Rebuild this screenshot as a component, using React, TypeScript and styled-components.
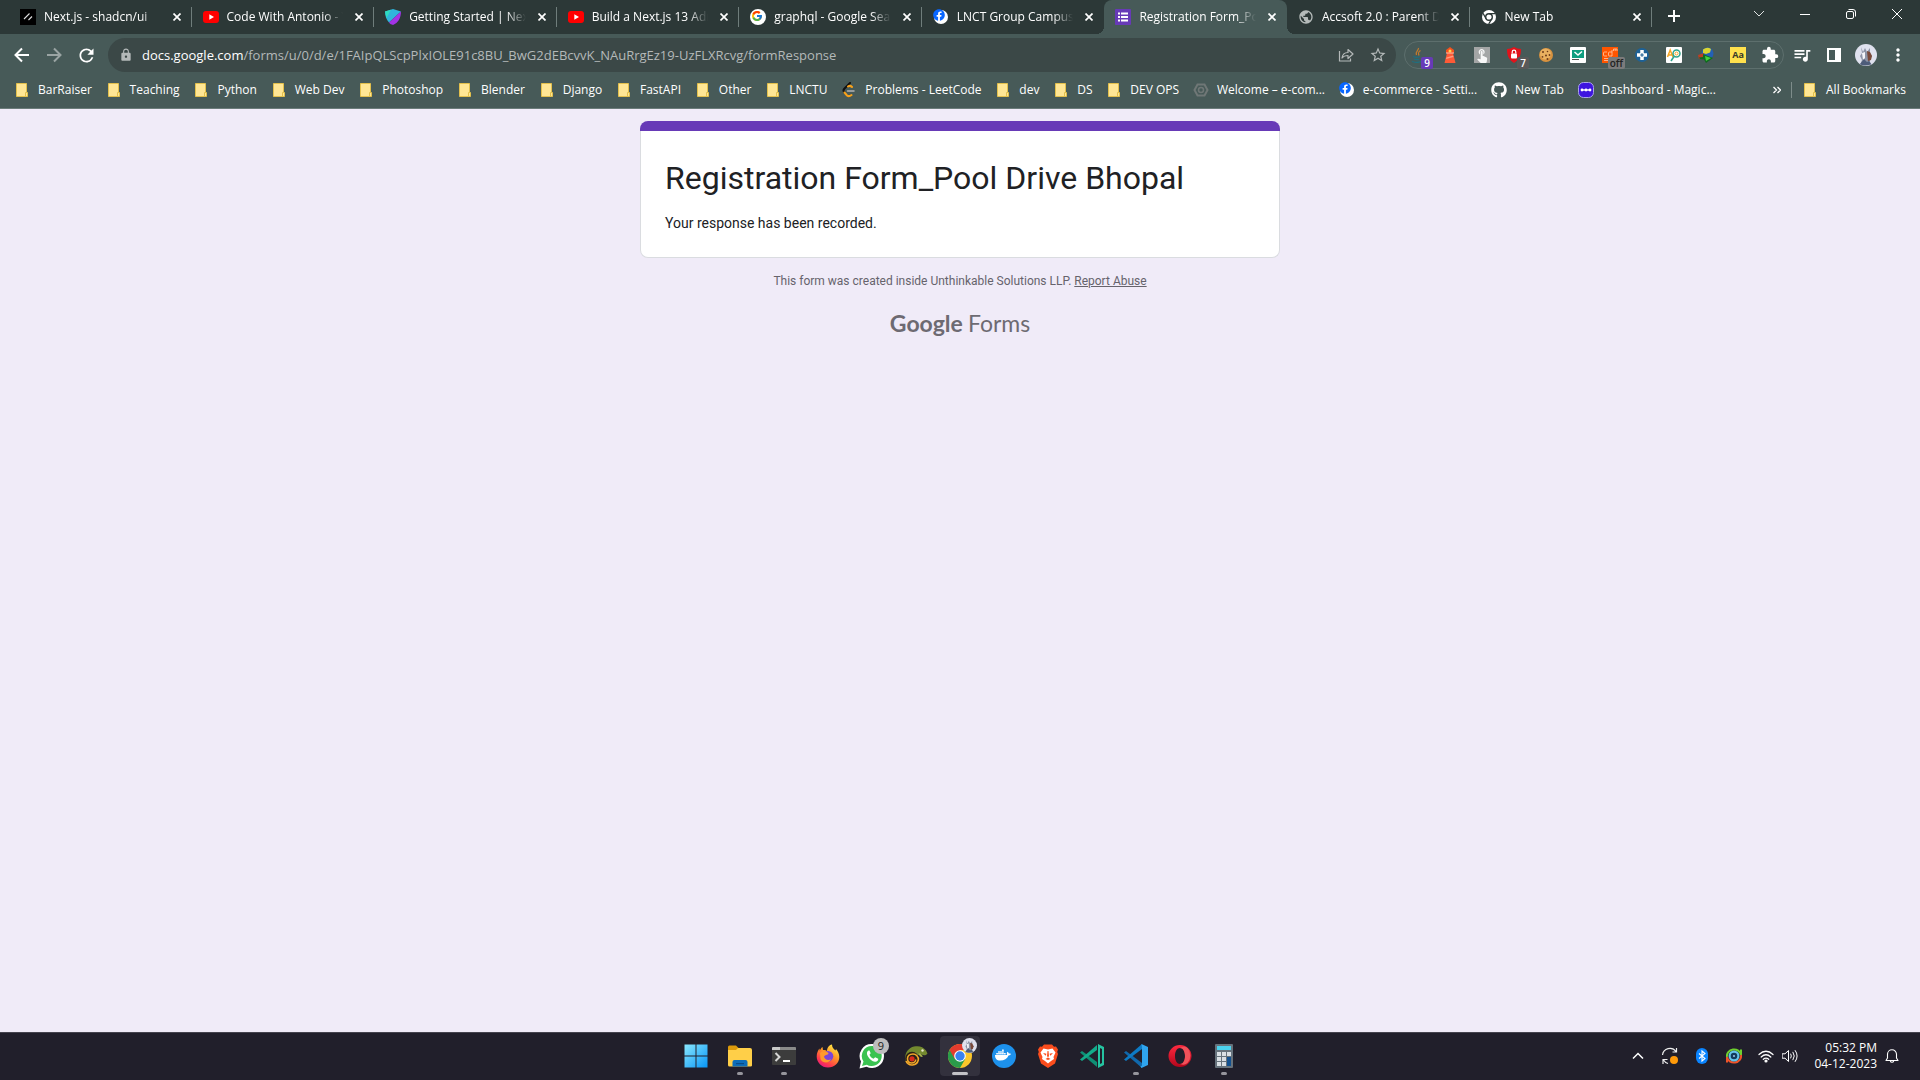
import React from "react";
import styled, { createGlobalStyle, css } from "styled-components";
import { FaFacebook, FaGithub, FaDocker } from "react-icons/fa";
import { FcGoogle } from "react-icons/fc";
import {
  MdRefresh,
  MdLock,
  MdStarBorder,
  MdExtension,
  MdQueueMusic,
  MdMoreVert,
  MdPublic,
  MdTouchApp,
} from "react-icons/md";

const colors = {
  strip: "#2c3837",
  toolbar: "#475a58",
  address: "#3b4847",
  page: "#f0ebf8",
  taskbar: "#211f2b",
  accent: "#673ab7",
};

const ui = `"Open Sans", "Noto Sans", sans-serif`;

const GlobalStyle = createGlobalStyle`
  *, *::before, *::after { box-sizing: border-box; }
  body { margin: 0; background: ${colors.page}; }
  button { font: inherit; color: inherit; background: none; border: 0; padding: 0; cursor: pointer; }
  svg { display: block; flex: none; }
`;

const Screen = styled.div`
  display: flex;
  flex-direction: column;
  min-height: 100vh;
  font-family: ${ui};
  color: #fff;
`;

/* ---------- tab strip ---------- */

const TabStrip = styled.header`
  display: flex;
  height: 34px;
  padding-left: 9px;
  background: ${colors.strip};
`;

const TabList = styled.nav`
  display: flex;
  flex: 1;
  min-width: 0;
`;

const Tab = styled.div<{ $active?: boolean }>`
  position: relative;
  display: flex;
  flex: 1 1 0;
  min-width: 0;
  align-items: center;
  gap: 8px;
  padding: 0 7px 0 11px;
  font-size: 12px;

  &:not(:has(+ [data-active="true"]))::after {
    content: "";
    position: absolute;
    right: 0;
    top: 7px;
    width: 1px;
    height: 20px;
    background: #6f7d7b;
  }

  ${(p) =>
    p.$active &&
    css`
      background: ${colors.toolbar};
      border-radius: 8px 8px 0 0;

      &&::after,
      &&::before {
        content: "";
        position: absolute;
        top: auto;
        bottom: 0;
        width: 8px;
        height: 8px;
      }
      &&::before {
        left: -8px;
        background: radial-gradient(circle at 0 0, transparent 8px, ${colors.toolbar} 8px);
      }
      &&&::after {
        right: -8px;
        width: 8px;
        height: 8px;
        top: auto;
        background: radial-gradient(circle at 100% 0, transparent 8px, ${colors.toolbar} 8px);
      }
    `}
`;

const TabTitle = styled.button`
  flex: 1;
  min-width: 0;
  overflow: hidden;
  white-space: nowrap;
  text-align: left;
  line-height: 20px;
  mask-image: linear-gradient(90deg, #000 calc(100% - 20px), transparent);
`;

const CloseTab = styled.button`
  display: grid;
  place-items: center;
  width: 16px;
  height: 16px;
`;

const NewTab = styled.button`
  display: grid;
  place-items: center;
  width: 28px;
  height: 32px;
  margin-left: 8px;
`;

const WindowControls = styled.div`
  display: flex;
  margin-left: 48px;
`;

const WindowButton = styled.button`
  display: grid;
  place-items: center;
  width: 46px;
  height: 28px;
`;

/* ---------- toolbar ---------- */

const Toolbar = styled.div`
  display: flex;
  align-items: center;
  height: 40px;
  padding: 2px 6px 0;
  background: ${colors.toolbar};
`;

const ToolButton = styled.button<{ $dim?: boolean }>`
  display: grid;
  place-items: center;
  width: 32px;
  height: 32px;
  opacity: ${(p) => (p.$dim ? 0.45 : 1)};
`;

const AddressBar = styled.form`
  display: flex;
  flex: 1;
  align-items: center;
  height: 34px;
  margin: 0 8px 0 6px;
  padding: 0 2px 0 11px;
  border-radius: 17px;
  background: ${colors.address};
  font-size: 13px;
  color: #b4b9b9;
`;

const Host = styled.label`
  margin-left: 9px;
  color: #fff;
`;

const PathInput = styled.input`
  flex: 1;
  min-width: 0;
  padding: 0;
  border: 0;
  outline: 0;
  background: none;
  color: inherit;
  font: inherit;
`;

const Extensions = styled.div`
  display: flex;
  align-items: center;
  gap: 8px;
  height: 28px;
  margin-right: 2px;
  padding: 0 1px;
  border: 1px solid #5d6f6d;
  border-radius: 14px;
`;

const ExtensionButton = styled.button`
  position: relative;
  display: grid;
  place-items: center;
  width: 24px;
  height: 26px;
`;

const ExtensionBadge = styled.span<{ $color: string; $ink: string }>`
  position: absolute;
  top: 15px;
  right: -3px;
  min-width: 12px;
  padding: 0 2px;
  border-radius: 2px;
  background: ${(p) => p.$color};
  color: ${(p) => p.$ink};
  font-size: 10px;
  font-weight: 600;
  line-height: 12px;
`;

/* ---------- bookmarks ---------- */

const Bookmarks = styled.nav`
  display: flex;
  align-items: center;
  height: 35px;
  padding: 0 14px 2px;
  border-bottom: 1px solid #6b7c7a;
  background: ${colors.toolbar};
  font-size: 12px;
`;

const BookmarkList = styled.div`
  display: flex;
  flex: 0 1 1702px;
  min-width: 0;
  justify-content: space-between;
`;

const Bookmark = styled.a`
  display: flex;
  align-items: center;
  gap: 8px;
  color: #fff;
  line-height: 20px;
  text-decoration: none;
  white-space: nowrap;
`;

const BookmarkEnd = styled.div`
  display: flex;
  align-items: center;
  gap: 10px;
  margin-left: auto;
`;

const Divider = styled.span`
  width: 1px;
  height: 16px;
  background: #7d8c8a;
`;

/* ---------- form ---------- */

const Page = styled.main`
  display: flex;
  flex: 1;
  flex-direction: column;
  align-items: center;
  padding-top: 12px;
  background: ${colors.page};
  font-family: Roboto, "Liberation Sans", sans-serif;
`;

const Card = styled.section`
  width: 100%;
  max-width: 640px;
  color: #202124;
`;

const CardAccent = styled.div`
  height: 10px;
  border-radius: 8px 8px 0 0;
  background: ${colors.accent};
`;

const CardBody = styled.div`
  padding: 25px 24px 23px;
  border: 1px solid #dadce0;
  border-top: 0;
  border-radius: 0 0 8px 8px;
  background: #fff;
`;

const FormTitle = styled.h1`
  margin: 0;
  font-size: 32px;
  font-weight: 400;
  line-height: 44px;
`;

const FormText = styled.p`
  margin: 13px 0 0;
  font-size: 14px;
  line-height: 21px;
`;

const Disclaimer = styled.p`
  margin: 15px 0 0;
  color: #66636c;
  font-size: 12px;
  line-height: 16px;
`;

const Report = styled.a`
  color: inherit;
`;

const FormsLogo = styled.a`
  display: flex;
  gap: 5px;
  margin-top: 18px;
  color: #6d6a72;
  font-family: Lato, sans-serif;
  font-size: 23px;
  line-height: 32px;
  text-decoration: none;
`;

const LogoStrong = styled.span`
  font-weight: 700;
`;

/* ---------- taskbar ---------- */

const Taskbar = styled.footer`
  display: grid;
  grid-template-columns: 1fr auto 1fr;
  align-items: center;
  height: 48px;
  padding-bottom: 2px;
  border-top: 1px solid #45434e;
  background: ${colors.taskbar};
`;

const Apps = styled.div`
  display: flex;
  grid-column: 2;
  gap: 4px;
`;

const AppButton = styled.button<{ $state?: "running" | "active" }>`
  position: relative;
  display: grid;
  place-items: center;
  width: 40px;
  height: 40px;
  border-radius: 4px;
  background: ${(p) => (p.$state === "active" ? "#33313d" : "none")};

  &::after {
    content: ${(p) => (p.$state ? '""' : "none")};
    position: absolute;
    bottom: 1px;
    width: ${(p) => (p.$state === "active" ? "16px" : "6px")};
    height: 3px;
    border-radius: 2px;
    background: ${(p) => (p.$state === "active" ? "#c3c2c6" : "#96959c")};
  }
`;

const Count = styled.span`
  position: absolute;
  top: 2px;
  right: 3px;
  width: 16px;
  height: 16px;
  border-radius: 8px;
  background: #bdbdbd;
  color: #222;
  font-size: 11px;
  line-height: 16px;
`;

const ProfileBadge = styled.span`
  position: absolute;
  top: 2px;
  right: 3px;
`;

const Tray = styled.div`
  display: flex;
  align-items: center;
  justify-content: flex-end;
  padding-right: 16px;
`;

const trayWidths = { narrow: "16px", normal: "24px", wide: "32px" };

const TrayButton = styled.button<{ $size?: keyof typeof trayWidths }>`
  display: grid;
  place-items: center;
  width: ${(p) => trayWidths[p.$size || "wide"]};
  height: 32px;
`;

const Clock = styled.time`
  width: 79px;
  margin-right: 3px;
  text-align: right;
  font-size: 12px;
  line-height: 16px;
  white-space: nowrap;
`;

/* ---------- drawings ---------- */

const CloseIcon = () => (
  <svg width="8" height="8" viewBox="0 0 8 8" stroke="#fff" strokeWidth="1.700">
    <path d="M.5.5l7 7M7.500.5l-7 7" />
  </svg>
);

const ArrowIcon = ({ forward }: { forward?: boolean }) => (
  <svg width="16" height="16" viewBox="0 0 16 16" fill="none" stroke="#fff" strokeWidth="2">
    <path d={forward ? "M1 8h13M8 1.500L14.500 8 8 14.500" : "M15 8H2M8 1.500L1.500 8 8 14.500"} />
  </svg>
);

const FolderIcon = () => (
  <svg width="16" height="16" viewBox="0 0 16 16">
    <path d="M2.500 1.500h10v9h1v4h-11z" fill="#ffe694" stroke="#e3c04c" />
    <path d="M11.500 14v-3.500h1.500" fill="none" stroke="#e3c04c" />
  </svg>
);

const ShadcnIcon = () => (
  <svg width="16" height="16" viewBox="0 0 16 16">
    <rect width="16" height="16" fill="#000" />
    <path d="M4 10l5.500-5.500M8.500 11l3.500-3.500" stroke="#ddd" strokeWidth="1.100" />
  </svg>
);

const ShieldIcon = () => (
  <svg width="16" height="16" viewBox="0 0 16 16">
    <path d="M0 2.500L8 0l8 2.500-12 11C1.500 11 0 7 0 2.500z" fill="#2fb5dc" />
    <path d="M16 2.500L4 13.500C5 15 6.500 15.500 8 16c5-2 8-7 8-13.500z" fill="#a233e6" />
    <path d="M0 2.500L6 .7 1.500 9z" fill="#2fdcc0" />
  </svg>
);

const YoutubeIcon = () => (
  <svg width="16" height="16" viewBox="0 0 16 16">
    <rect y="2" width="16" height="12" rx="3" fill="#f00" />
    <path d="M6.300 5.300v5.400L11 8z" fill="#fff" />
  </svg>
);

const GoogleIcon = () => (
  <svg width="16" height="16" viewBox="0 0 16 16">
    <circle cx="8" cy="8" r="8" fill="#fff" />
    <FcGoogle x="1" y="1" width="14" height="14" />
  </svg>
);

const FacebookIcon = () => (
  <svg width="16" height="16" viewBox="0 0 16 16">
    <circle cx="8" cy="8" r="7" fill="#fff" />
    <FaFacebook x="0" y="0" width="16" height="16" color="#0866ff" />
  </svg>
);

const FormsIcon = () => (
  <svg width="16" height="16" viewBox="0 0 16 16">
    <rect width="16" height="16" rx="1" fill={colors.accent} />
    <path d="M3 4.500h2M3 8h2M3 11.500h2M6 4.500H13M6 8H13M6 11.500H13" stroke="#fff" strokeWidth="1.800" />
  </svg>
);

const ChromeMonoIcon = () => (
  <svg width="16" height="16" viewBox="0 0 16 16">
    <circle cx="8" cy="8" r="7" fill="#fff" />
    <circle cx="8" cy="8" r="3.300" fill="#fff" stroke="#2c3837" strokeWidth="1.400" />
    <path d="M8 4.700h6.500M5.100 9.700L2 4.300M10.900 9.700L7.700 15" stroke="#2c3837" strokeWidth="1.300" />
  </svg>
);

const HexIcon = () => (
  <svg width="16" height="16" viewBox="0 0 16 16" fill="none" stroke="#6f7776">
    <path d="M4.500 2.500h7l3 5.500-3 5.500h-7L1.500 8z" strokeWidth="2" />
    <circle cx="8" cy="8" r="2.500" strokeWidth="1.500" />
  </svg>
);

const MagicIcon = () => (
  <svg width="16" height="16" viewBox="0 0 16 16">
    <rect x=".5" y=".5" width="15" height="15" rx="5" fill="#3d14e0" stroke="#a9a4e8" />
    <path d="M3 8h10" stroke="#fff" strokeWidth="1.400" />
    <circle cx="4" cy="8" r="1.400" fill="#fff" />
    <circle cx="8" cy="8" r="1.400" fill="#fff" />
    <circle cx="12" cy="8" r="1.400" fill="#fff" />
  </svg>
);

const LeetIcon = () => (
  <svg width="16" height="16" viewBox="0 0 16 16" fill="none" strokeLinecap="round" strokeWidth="2">
    <path d="M9 1L3.500 6.500Q1.500 8.500 3.500 10.500" stroke="#111" />
    <path d="M3.500 10.500L6 13.500Q8 15 10.500 13M7 4.500Q9 3 11 5" stroke="#f8a119" />
    <path d="M6.500 9H13" stroke="#b3b3b3" strokeWidth="1.500" />
  </svg>
);

const JavaIcon = () => (
  <svg width="16" height="16" viewBox="0 0 16 16" fill="none">
    <path d="M8.500 1C9 3 5 4.500 6.500 8M10.500 3.500C8 5 8 6 9 8.500" stroke="#c07a2d" strokeWidth="1.300" />
    <path d="M3 9.500c2 1 5 1 7 0M4 12c2 .8 4 .8 5 .3M2 14.500c3 1 7 1 9 0" stroke="#1f6f80" strokeWidth="1.300" />
  </svg>
);

const LighthouseIcon = () => (
  <svg width="16" height="18" viewBox="0 0 16 18">
    <path d="M8 1l4 3v3H4V4z" fill="#f4511e" />
    <circle cx="8" cy="5" r="1.500" fill="#ffd54f" />
    <path d="M5 7h6l2.500 10h-11z" fill="#ff5a36" />
    <path d="M4.500 11.500l6.500-2 .5 1.500L4 13z" fill="#ff9c80" />
    <path d="M4 7h8" stroke="#ffc1ad" />
  </svg>
);

const TouchIcon = () => (
  <svg width="16" height="16" viewBox="0 0 16 16">
    <rect width="16" height="16" fill="#a4a6a6" />
    <MdTouchApp x="0" y="0" width="16" height="16" color="#f7f7f7" />
  </svg>
);

const ShieldLockIcon = () => (
  <svg width="16" height="16" viewBox="0 0 16 16">
    <path d="M8 0q3.500 2 7 2c0 7-2 11-7 14C3 13 1 9 1 2q3.500 0 7-2z" fill="#e2131b" />
    <rect x="5" y="6.500" width="6" height="5" rx="1" fill="#fff" />
    <path d="M6.200 6.500V5a1.800 1.800 0 013.600 0v1.500" fill="none" stroke="#fff" strokeWidth="1.200" />
  </svg>
);

const CookieIcon = () => (
  <svg width="16" height="16" viewBox="0 0 16 16">
    <circle cx="8" cy="8" r="7" fill="#d8923f" />
    <circle cx="7.500" cy="7" r="5.500" fill="#e9b060" />
    <g fill="#6d3b18">
      <circle cx="5" cy="5" r="1" />
      <circle cx="9.500" cy="4.500" r=".8" />
      <circle cx="8" cy="8.500" r="1" />
      <circle cx="4.500" cy="9.800" r=".9" />
      <circle cx="11.500" cy="8" r=".9" />
      <circle cx="9.500" cy="12" r="1" />
    </g>
  </svg>
);

const MailIcon = () => (
  <svg width="16" height="16" viewBox="0 0 16 16">
    <rect width="16" height="16" rx="1" fill="#fff" />
    <rect x="2" y="3" width="12" height="8" fill="#0f9d80" />
    <path d="M4.500 5l3.500 3 4-3.500" fill="none" stroke="#fff" strokeWidth="1.500" />
    <path d="M2 12.500h7" stroke="#555" />
  </svg>
);

const CdIcon = () => (
  <svg width="16" height="16" viewBox="0 0 16 16">
    <rect width="16" height="16" fill="#ff5500" />
    <path
      d="M5 5H2.500q-1 0-1 1v2q0 1 1 1H5M10 3v6H7.500q-1 0-1-1V6q0-1 1-1H10M11.500 4V2H15v2M13.200 2v2M2 11.500h8M2 13.500h5"
      stroke="#ffc9a8"
      fill="none"
      strokeWidth=".8"
    />
  </svg>
);

const PlusDotIcon = () => (
  <svg width="16" height="16" viewBox="0 0 16 16">
    <circle cx="8" cy="8" r="7" fill="#1e6196" />
    <path d="M8 3v10M3 8h10" stroke="#fff" strokeWidth="3.500" />
    <path d="M8 6.200v3.600M6.200 8h3.600" stroke="#1e6196" strokeWidth="1.200" />
  </svg>
);

const SearchLettersIcon = () => (
  <svg width="16" height="16" viewBox="0 0 16 16" fill="none">
    <rect width="16" height="16" rx="1" fill="#fff" />
    <path d="M1.500 10l2.700-7 2.800 7M2.500 8H6" stroke="#f5a623" strokeWidth="1.500" />
    <circle cx="10.500" cy="6.500" r="3.500" stroke="#2fa58c" strokeWidth="1.500" />
    <circle cx="10.500" cy="6.500" r="1.500" stroke="#f5a623" />
    <path d="M8 9.500L5 14" stroke="#2fa58c" strokeWidth="1.600" />
  </svg>
);

const IdmIcon = () => (
  <svg width="16" height="16" viewBox="0 0 16 16">
    <circle cx="9.500" cy="6.500" r="6" fill="#2360b5" />
    <path d="M5 2.500Q9-.5 13 2l-1 3.500-4 1.500-3-1z" fill="#d9d431" />
    <path d="M0 8l6-2-1 5-4 1z" fill="#bd3d23" />
    <path d="M1 10.500l4-.5V7l10 4-7 5-2-3.500-4-.5z" fill="#0f6b1f" />
    <path d="M7 9l6 2-5 3z" fill="#45d23b" />
  </svg>
);

const AvatarIcon = ({ size = 22 }: { size?: number }) => (
  <svg width={size} height={size} viewBox="0 0 22 22">
    <circle cx="11" cy="11" r="11" fill="#dfe1ee" />
    <path d="M6 3l2 5 2-4 2 4 3-4v5l2 3-2 3v3l2 3H5l2-5-2-4 2-3z" fill="#8d94a6" />
    <path d="M12 7l3 1 2 4-1 4-3 1z" fill="#7a4a3a" />
    <path d="M7 9l3-1v6l-2 2z" fill="#f5f5fa" />
    <path d="M5 20l4-5 3 3 2-1 2 3q-6 3-11 0z" fill="#4d5c7a" />
  </svg>
);

const ShareIcon = () => (
  <svg width="16" height="16" viewBox="0 0 16 16" fill="none" stroke="currentColor" strokeWidth="1.200">
    <path d="M1.500 4v10h11v-2.500" />
    <path d="M4 11c.5-4 3-5.500 6-5.500v-3L15 7l-5 4.500v-3c-3 0-4.500.5-6 2.500z" strokeLinejoin="round" />
  </svg>
);

const SidePanelIcon = () => (
  <svg width="16" height="16" viewBox="0 0 16 16">
    <path d="M1 1h14v14H1zM3 3v10h6V3z" fill="#fff" fillRule="evenodd" />
  </svg>
);

const WindowsIcon = () => (
  <svg width="24" height="24" viewBox="0 0 24 24">
    <defs>
      <linearGradient id="win" x1="0" y1="0" x2="1" y2="1">
        <stop offset="0" stopColor="#8ae8ff" />
        <stop offset="1" stopColor="#0795f5" />
      </linearGradient>
    </defs>
    <path d="M.5.5h11v11H.500zM12.500.5h11v11h-11zM.5 12.500h11v11H.500zM12.500 12.500h11v11h-11z" fill="url(#win)" />
  </svg>
);

const ExplorerIcon = () => (
  <svg width="24" height="24" viewBox="0 0 24 24">
    <path d="M0 3q0-1.500 1.500-1.500H8L10.500 4v4H0z" fill="#dd9a0b" />
    <path d="M0 6h8l2-2h12q2 0 2 2v15.500q0 1-1.500 1h-21Q0 22.500 0 21z" fill="#ffcf48" />
    <path d="M4.500 22.500V18q0-2 2-2h11q2 0 2 2v4.500z" fill="#0d6db8" />
    <path d="M8 19h8v1.200H8z" fill="#094b85" />
  </svg>
);

const TerminalIcon = () => (
  <svg width="24" height="20" viewBox="0 0 24 20">
    <rect y="1" width="24" height="18" rx="1" fill="#3c3c3c" />
    <path d="M0 2q0-1 1-1h22q1 0 1 1v2H0z" fill="#8a8a8a" />
    <path d="M1 1h7v3H0V2z" fill="#c9c9c9" />
    <path d="M3.500 7l4 4-4 4" stroke="#d6d6d6" strokeWidth="2" fill="none" />
    <path d="M11 15h7" stroke="#fff" strokeWidth="2" />
  </svg>
);

const FirefoxIcon = () => (
  <svg width="24" height="24" viewBox="0 0 24 24">
    <defs>
      <linearGradient id="fox" x1=".8" y1="0" x2=".2" y2="1">
        <stop offset="0" stopColor="#fff04a" />
        <stop offset=".4" stopColor="#ff9825" />
        <stop offset=".75" stopColor="#ff3b4b" />
        <stop offset="1" stopColor="#e31587" />
      </linearGradient>
    </defs>
    <path
      d="M12 23.500C5.500 23.500.7 18.500.7 12.500c0-3.500 1.300-6 2.800-8l.3 2.300C4.500 5 5.500 3.500 6.500 3L7 6c1.500-.3 3 0 4 1C11 4 13 1 16 .5c0 3 1.500 4 3.500 6l.5-1.500c2 2 3.300 5 3.300 8 0 6-5 10.500-11.300 10.500z"
      fill="url(#fox)"
    />
    <circle cx="12" cy="12.300" r="5.300" fill="#7a45d8" />
    <path d="M4 9c2-2 4.500-2 7-1 2 .8 2 2 0 2.800-1.500.5-2.500.5-3 2 .8 3 4 4 7 2.500-1.500 4-8 4.500-10.500 0z" fill="#ff9a2b" />
  </svg>
);

const WhatsappIcon = () => (
  <svg width="26" height="26" viewBox="0 0 26 26">
    <path d="M13.500 1A12 12 0 002 18.500L.5 25.500l7-1.800A12 12 0 0025 13 12 12 0 0013.500 1z" fill="#fff" />
    <path d="M13.200 3A10 10 0 004.500 18.500L3 23l4.800-1.300A10 10 0 1013.200 3z" fill="#3ac351" />
    <path
      d="M9.500 7.500c-2 1-2 3.500-.5 6 1.700 2.800 4 4.800 7 5.300 2 .2 3.500-1.300 3.200-3l-3-1.600-1.700 1.600c-2-.8-3.300-2.100-4-4l1.200-1.500-1.200-2.800z"
      fill="#fff"
    />
  </svg>
);

const ChameleonIcon = () => (
  <svg width="24" height="24" viewBox="0 0 24 24" fill="none">
    <path d="M2.500 19C-1 12 3 4 10 2.500c5-1 9 0 12 4l1.500 3-1.500 1.500c-3 .5-4 0-6-1.500z" fill="#73892f" />
    <circle cx="8" cy="14.500" r="6.800" fill="#2b2116" />
    <path
      d="M2 17a6.500 6.500 0 0012.300-1c.5-3.500-2.300-6-5.300-6-3.500 0-5.500 2-5.500 4.800 0 2.700 2 4.200 4.200 4.200s4-1.500 4-3.500"
      stroke="#f2a82a"
      strokeWidth="1.600"
    />
    <circle cx="8" cy="14.800" r="2.600" fill="#d92a1c" />
    <circle cx="18.500" cy="6.500" r="1.200" fill="#e6e8c8" />
    <path d="M16 9l3 3.500-2 .5-3-3z" fill="#a5b34c" />
  </svg>
);

const ChromeIcon = () => (
  <svg width="24" height="24" viewBox="0 0 24 24">
    <circle cx="12" cy="12" r="12" fill="#fcc72b" />
    <path d="M1.600 6A12 12 0 0012 24l5.200-9z" fill="#2a9c4a" />
    <path d="M1.600 6A12 12 0 0122.400 6H12L6.800 15z" fill="#e33b2e" />
    <circle cx="12" cy="12" r="5.800" fill="#fff" />
    <circle cx="12" cy="12" r="4.700" fill="#3a82f0" />
  </svg>
);

const DockerIcon = () => (
  <svg width="24" height="24" viewBox="0 0 24 24">
    <circle cx="12" cy="12" r="12" fill="#1d91ec" />
    <FaDocker x="3" y="3" width="18" height="18" color="#fff" />
  </svg>
);

const BraveIcon = () => (
  <svg width="22" height="24" viewBox="0 0 22 24">
    <path d="M7 .5h8l2 2.300 2-.3 2 3-.8 2.500.8 2-3 9.500L11 24l-7-4.500L1 10l.8-2L1 5.500l2-3 2 .3z" fill="#fb4d1d" />
    <path d="M6.500 4.500L11 5.500l4.500-1 3 4-2 4.500.5 2-3 2-3 2.500-3-2.500-3-2 .5-2-2-4.500z" fill="#fff" />
    <path d="M6 9l3.500.8-.8 2zM16 9l-3.500.8.8 2zM8.500 15l2.500 1.100 2.500-1.100-2.500-1.400zM10.500 7h1l.5 5-1 1.500-1-1.500z" fill="#fb4d1d" />
  </svg>
);

const CodeIcon = () => (
  <svg width="24" height="24" viewBox="0 0 24 24">
    <path d="M0 8.500L2 7l16 12v5z" fill="#1068ac" />
    <path d="M0 15.500L2 17 18 5V0z" fill="#0d7ac4" />
    <path d="M17.500 0L24 3v18l-6.500 3-1-1.500 1.500-1V3z" fill="#2fa4ee" />
  </svg>
);

const InsidersIcon = () => (
  <svg width="24" height="24" viewBox="0 0 24 24">
    <path d="M0 8.500L2 7l15 11v5z" fill="#0f8f75" />
    <path d="M0 15.500L2 17 17 6V1z" fill="#13ab8a" />
    <path d="M18 0l6 3v18l-6 3zM20 4v16l2-1V5z" fill="#25c3a1" fillRule="evenodd" />
  </svg>
);

const OperaIcon = () => (
  <svg width="24" height="24" viewBox="0 0 24 24">
    <defs>
      <linearGradient id="opera" x1="0" y1="0" x2="0" y2="1">
        <stop offset="0" stopColor="#ff2a40" />
        <stop offset="1" stopColor="#b3061c" />
      </linearGradient>
    </defs>
    <path
      d="M12 1a11.500 11 0 100 22 11.500 11 0 100-22zm0 3c3 0 5 3.500 5 8s-2 8-5 8-5-3.500-5-8 2-8 5-8z"
      fill="url(#opera)"
      fillRule="evenodd"
    />
    <path d="M12 4c3 0 5 3.500 5 8s-2 8-5 8q4.500 2 7.500-1A11 11 0 0019.500 4Q16 1.500 12 4z" fill="#f2525a" />
  </svg>
);

const CalculatorIcon = () => (
  <svg width="18" height="24" viewBox="0 0 18 24">
    <rect width="18" height="24" rx="1" fill="#66727c" />
    <rect x="2" y="2" width="14" height="4" fill="#4bd2ee" />
    <path d="M2 8h4v4H2zM7 8h4v4H7zM12 8h4v4h-4zM2 13h4v4H2zM7 13h4v4H7zM2 18h4v4H2zM7 18h4v4H7z" fill="#d9dfe4" />
    <path d="M12 13h4v9h-4z" fill="#12508f" />
  </svg>
);

const SyncIcon = () => (
  <svg width="18" height="18" viewBox="0 0 18 18" fill="none" stroke="#eee" strokeWidth="1.200">
    <path d="M1.500 8A7.500 7.500 0 0115 4.500M15.500 1v4h-4M7 16.500A7.500 7.500 0 012.500 13M2 17v-4.500h4.500" />
    <circle cx="13" cy="13" r="4" fill="#ff9a0a" stroke="none" />
  </svg>
);

const BluetoothIcon = () => (
  <svg width="12" height="16" viewBox="0 0 12 16">
    <rect width="12" height="16" rx="6" fill="#0a84ff" />
    <path d="M3 5.500l6 5-3 2.500V3l3 2.500-6 5" fill="none" stroke="#fff" strokeWidth="1.100" />
  </svg>
);

const RingIcon = () => (
  <svg width="16" height="16" viewBox="0 0 16 16" fill="none">
    <path d="M1 9A7 6.500 0 0115 7V1.500" stroke="#6fd12f" strokeWidth="2" />
    <path d="M15 7A7 6.500 0 011 9v5.500" stroke="#f0542a" strokeWidth="2" />
    <circle cx="8" cy="8" r="5.500" fill="#65c5ea" />
    <circle cx="8" cy="8" r="3.300" fill="#143b5c" />
    <circle cx="8" cy="8" r="1" fill="#9ce" />
  </svg>
);

const WifiIcon = () => (
  <svg width="16" height="16" viewBox="0 0 16 16" fill="none" stroke="#fff" strokeWidth="1.200" strokeLinecap="round">
    <path d="M1 6.500q7-6.500 14 0M3.200 9q4.800-4.500 9.600 0M5.300 11.300q2.700-2.500 5.400 0" />
    <circle cx="8" cy="13" r="1" fill="#fff" />
  </svg>
);

const VolumeIcon = () => (
  <svg width="16" height="16" viewBox="0 0 16 16" fill="none" stroke="#fff" strokeLinecap="round" strokeLinejoin="round">
    <path d="M.5 5.800H3L6.500 2.500v11L3 10.200H.500z" />
    <path d="M8.800 6q1.200 2 0 4M11 4.200q2.700 3.800 0 7.600M13.200 2.500q4 5.500 0 11" />
  </svg>
);

const BellIcon = () => (
  <svg width="16" height="16" viewBox="0 0 16 16" fill="none" stroke="#fff" strokeWidth="1.100" strokeLinejoin="round">
    <path d="M3.500 10V6.200a4.500 4.500 0 019 0V10l1.500 2.500H2zM6.300 13a1.800 1.800 0 003.400 0" />
  </svg>
);

const ChevronUpIcon = () => (
  <svg width="12" height="8" viewBox="0 0 12 8" fill="none" stroke="#fff" strokeWidth="1.500">
    <path d="M1 6.500l5-5 5 5" />
  </svg>
);

const FontsIcon = styled.span`
  width: 16px;
  height: 16px;
  background: #ffe14d;
  color: #3a3a2a;
  font-size: 9px;
  font-weight: 700;
  line-height: 16px;
  text-align: center;
`;

/* ---------- data ---------- */

const tabs = [
  { title: "Next.js - shadcn/ui", icon: <ShadcnIcon /> },
  { title: "Code With Antonio - Y", icon: <YoutubeIcon /> },
  { title: "Getting Started | NextA", icon: <ShieldIcon /> },
  { title: "Build a Next.js 13 Admi", icon: <YoutubeIcon /> },
  { title: "graphql - Google Sear", icon: <GoogleIcon /> },
  { title: "LNCT Group Campus", icon: <FacebookIcon /> },
  { title: "Registration Form_Poo", icon: <FormsIcon />, active: true },
  { title: "Accsoft 2.0 : Parent De", icon: <MdPublic size={16} color="#b5bbba" /> },
  { title: "New Tab", icon: <ChromeMonoIcon /> },
];

const bookmarks: { name: string; icon?: React.ReactNode }[] = [
  ...["BarRaiser", "Teaching", "Python", "Web Dev", "Photoshop", "Blender", "Django", "FastAPI", "Other", "LNCTU"].map(
    (name) => ({ name })
  ),
  { name: "Problems - LeetCode", icon: <LeetIcon /> },
  { name: "dev" },
  { name: "DS" },
  { name: "DEV OPS" },
  { name: "Welcome – e-com...", icon: <HexIcon /> },
  { name: "e-commerce - Setti...", icon: <FacebookIcon /> },
  { name: "New Tab", icon: <FaGithub size={16} /> },
  { name: "Dashboard - Magic...", icon: <MagicIcon /> },
];

const extensions: { name: string; icon: React.ReactNode; badge?: string; color?: string; ink?: string }[] = [
  { name: "Java", icon: <JavaIcon />, badge: "9", color: "#673ab7" },
  { name: "Lighthouse", icon: <LighthouseIcon /> },
  { name: "Touch", icon: <TouchIcon /> },
  { name: "Blocker", icon: <ShieldLockIcon />, badge: "7", color: "#595959" },
  { name: "Cookies", icon: <CookieIcon /> },
  { name: "Mail", icon: <MailIcon /> },
  { name: "Debugger", icon: <CdIcon />, badge: "off", color: "#7b7b7b", ink: "#222" },
  { name: "Health", icon: <PlusDotIcon /> },
  { name: "Word search", icon: <SearchLettersIcon /> },
  { name: "Downloads", icon: <IdmIcon /> },
  { name: "Fonts", icon: <FontsIcon>Aa</FontsIcon> },
  { name: "Extensions", icon: <MdExtension size={18} /> },
];

const apps: {
  name: string;
  icon: React.ReactNode;
  state?: "running" | "active";
  count?: string;
  profile?: boolean;
}[] = [
  { name: "Start", icon: <WindowsIcon /> },
  { name: "File Explorer", icon: <ExplorerIcon />, state: "running" },
  { name: "Terminal", icon: <TerminalIcon />, state: "running" },
  { name: "Firefox", icon: <FirefoxIcon /> },
  { name: "WhatsApp", icon: <WhatsappIcon />, count: "9" },
  { name: "Chameleon", icon: <ChameleonIcon /> },
  { name: "Chrome", icon: <ChromeIcon />, state: "active", profile: true },
  { name: "Docker", icon: <DockerIcon /> },
  { name: "Brave", icon: <BraveIcon /> },
  { name: "Code Insiders", icon: <InsidersIcon /> },
  { name: "Code", icon: <CodeIcon />, state: "running" },
  { name: "Opera", icon: <OperaIcon /> },
  { name: "Calculator", icon: <CalculatorIcon />, state: "running" },
];

export default function App() {
  return (
    <Screen>
      <GlobalStyle />
      <TabStrip>
        <TabList aria-label="Tabs">
          {tabs.map((tab, i) => (
            <Tab key={i} $active={tab.active} data-active={!!tab.active}>
              {tab.icon}
              <TabTitle>{tab.title}</TabTitle>
              <CloseTab aria-label="Close tab">
                <CloseIcon />
              </CloseTab>
            </Tab>
          ))}
        </TabList>
        <NewTab aria-label="New tab">
          <svg width="12" height="12" viewBox="0 0 12 12" stroke="#fff" strokeWidth="2">
            <path d="M6 0v12M0 6h12" />
          </svg>
        </NewTab>
        <WindowControls>
          <WindowButton aria-label="Search tabs">
            <svg width="12" height="8" viewBox="0 0 12 8" fill="none" stroke="#dfe3e2">
              <path d="M1 1l5 5 5-5" />
            </svg>
          </WindowButton>
          <WindowButton aria-label="Minimize">
            <svg width="10" height="10" viewBox="0 0 10 10" stroke="#fff">
              <path d="M0 5.500h10" />
            </svg>
          </WindowButton>
          <WindowButton aria-label="Restore">
            <svg width="10" height="10" viewBox="0 0 10 10" fill="none" stroke="#fff">
              <rect x=".5" y="2.500" width="7" height="7" rx="1.500" />
              <path d="M2.500.500H7A2.500 2.500 0 019.500 3v4.500" />
            </svg>
          </WindowButton>
          <WindowButton aria-label="Close">
            <svg width="10" height="10" viewBox="0 0 10 10" stroke="#fff">
              <path d="M0 0l10 10M10 0L0 10" />
            </svg>
          </WindowButton>
        </WindowControls>
      </TabStrip>

      <Toolbar>
        <ToolButton aria-label="Back"><ArrowIcon /></ToolButton>
        <ToolButton aria-label="Forward" $dim><ArrowIcon forward /></ToolButton>
        <ToolButton aria-label="Reload"><MdRefresh size={21} /></ToolButton>
        <AddressBar onSubmit={(e) => e.preventDefault()}>
          <MdLock size={14} />
          <Host htmlFor="path">docs.google.com</Host>
          <PathInput
            id="path"
            spellCheck={false}
            defaultValue="/forms/u/0/d/e/1FAIpQLScpPlxIOLE91c8BU_BwG2dEBcvvK_NAuRrgEz19-UzFLXRcvg/formResponse"
          />
          <ToolButton type="button" aria-label="Share"><ShareIcon /></ToolButton>
          <ToolButton type="button" aria-label="Bookmark this page"><MdStarBorder size={18} /></ToolButton>
        </AddressBar>
        <Extensions>
          {extensions.map((ext) => (
            <ExtensionButton key={ext.name} aria-label={ext.name}>
              {ext.icon}
              {ext.badge && (
                <ExtensionBadge $color={ext.color || "#555"} $ink={ext.ink || "#fff"}>
                  {ext.badge}
                </ExtensionBadge>
              )}
            </ExtensionButton>
          ))}
        </Extensions>
        <ToolButton aria-label="Media"><MdQueueMusic size={20} /></ToolButton>
        <ToolButton aria-label="Side panel"><SidePanelIcon /></ToolButton>
        <ToolButton aria-label="Profile"><AvatarIcon /></ToolButton>
        <ToolButton aria-label="Menu"><MdMoreVert size={20} /></ToolButton>
      </Toolbar>

      <Bookmarks aria-label="Bookmarks">
        <BookmarkList>
          {bookmarks.map((b, i) => (
            <Bookmark key={i} href="#">
              {b.icon || <FolderIcon />}
              {b.name}
            </Bookmark>
          ))}
        </BookmarkList>
        <BookmarkEnd>
          <button aria-label="More bookmarks">
            <svg width="8" height="8" viewBox="0 0 8 8" fill="none" stroke="#fff" strokeWidth="1.300">
              <path d="M.5 1l3 3-3 3M4.500 1l3 3-3 3" />
            </svg>
          </button>
          <Divider />
          <Bookmark href="#">
            <FolderIcon />
            All Bookmarks
          </Bookmark>
        </BookmarkEnd>
      </Bookmarks>

      <Page>
        <Card>
          <CardAccent />
          <CardBody>
            <FormTitle>Registration Form_Pool Drive Bhopal</FormTitle>
            <FormText>Your response has been recorded.</FormText>
          </CardBody>
        </Card>
        <Disclaimer>
          This form was created inside Unthinkable Solutions LLP. <Report href="#">Report Abuse</Report>
        </Disclaimer>
        <FormsLogo href="#">
          <LogoStrong>Google</LogoStrong>
          <span>Forms</span>
        </FormsLogo>
      </Page>

      <Taskbar>
        <Apps>
          {apps.map((app) => (
            <AppButton key={app.name} aria-label={app.name} $state={app.state}>
              {app.icon}
              {app.count && <Count>{app.count}</Count>}
              {app.profile && (
                <ProfileBadge>
                  <AvatarIcon size={15} />
                </ProfileBadge>
              )}
            </AppButton>
          ))}
        </Apps>
        <Tray>
          <TrayButton aria-label="Hidden icons"><ChevronUpIcon /></TrayButton>
          <TrayButton aria-label="Updates"><SyncIcon /></TrayButton>
          <TrayButton aria-label="Bluetooth"><BluetoothIcon /></TrayButton>
          <TrayButton aria-label="Monitor"><RingIcon /></TrayButton>
          <TrayButton aria-label="Network"><WifiIcon /></TrayButton>
          <TrayButton $size="narrow" aria-label="Volume"><VolumeIcon /></TrayButton>
          <Clock>
            05:32 PM
            <br />
            04-12-2023
          </Clock>
          <TrayButton $size="normal" aria-label="Notifications"><BellIcon /></TrayButton>
        </Tray>
      </Taskbar>
    </Screen>
  );
}
